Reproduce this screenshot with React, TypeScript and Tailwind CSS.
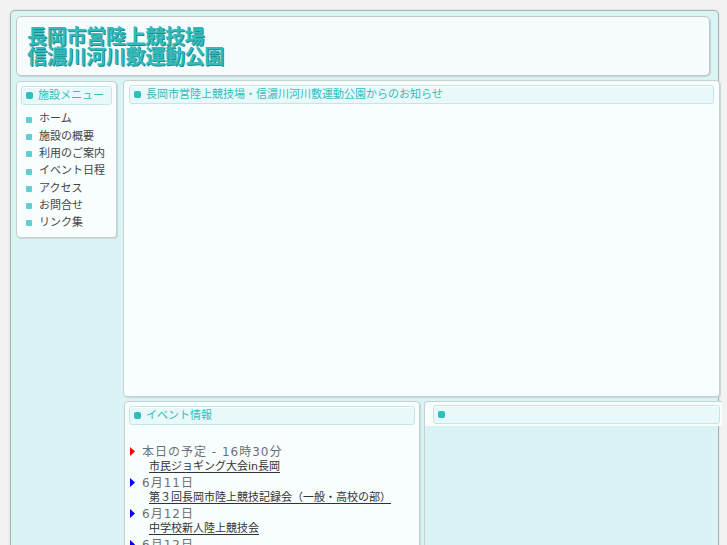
import React from "react";

const news = [
  { color: "#ff0000", date: "本日の予定 - 16時30分", link: "市民ジョギング大会in長岡" },
  { color: "#0000ff", date: "6月11日", link: "第３回長岡市陸上競技記録会（一般・高校の部）" },
  { color: "#0000ff", date: "6月12日", link: "中学校新人陸上競技会" },
  { color: "#0000ff", date: "6月12日", link: "信濃川河川敷ウォーキング" },
];

const menu = ["ホーム", "施設の概要", "利用のご案内", "イベント日程", "アクセス", "お問合せ", "リンク集"];

function Pill({ children, className = "" }: { children?: React.ReactNode; className?: string }) {
  return (
    <div
      className={
        "flex h-[19px] items-center gap-[5px] rounded-[3px] border border-[#c3e6e8] bg-[#e9f8f9] pl-[4px] text-[11px] leading-none text-[#33bcbc] shadow-[inset_0_1px_0_#ffffff] " +
        className
      }
    >
      <span className="h-[7px] w-[7px] shrink-0 rounded-[2px] bg-[#2fbdbd]" />
      {children}
    </div>
  );
}

export default function App() {
  return (
    <div className="min-h-screen overflow-hidden bg-[#f2f2f2] pl-[10px] pt-[10px] font-['DejaVu_Sans','Noto_Sans_CJK_JP',sans-serif]">
      <div className="h-[560px] w-[709px] rounded-[5px] border border-[#a9b3b3] bg-[#daf4f5] p-[5px] shadow-[0_0_2px_#c8cccc]">
        <header className="h-[60px] w-[694px] rounded-[5px] border border-[#bfc9c9] bg-[#f6fcfd] pl-[10px] pt-[9px] shadow-[1px_1px_1px_#c6d2d2]">
          <h1 className="font-['Noto_Sans_CJK_JP',sans-serif] text-[20px] font-bold leading-[20px] tracking-[-0.3px] text-[#34baba] [text-shadow:1px_1px_0_#1f8d8d]">
            <span className="block">長岡市営陸上競技場</span>
            <span className="block">信濃川河川敷運動公園</span>
          </h1>
        </header>

        <div className="mt-[4px] flex gap-[6px]">
          <aside className="mt-px h-[157px] w-[101px] shrink-0 rounded-[4px] border border-[#c4d2d2] bg-[#f8fdfd] p-[4px] shadow-[1px_1px_1px_#c9d6d6]">
            <Pill>施設メニュー</Pill>
            <ul className="mt-[6px] flex flex-col">
              {menu.map((m) => (
                <li key={m} className="flex h-[17.3px] items-center gap-[7px] pl-[5px] text-[11px] text-[#444444]">
                  <span className="h-[6px] w-[6px] shrink-0 rounded-[1px] bg-[#5fcfd0]" />
                  <span className="whitespace-nowrap">{m}</span>
                </li>
              ))}
            </ul>
          </aside>

          <div className="w-[597px] shrink-0">
            <section className="h-[317px] rounded-[4px] border border-[#c4d2d2] bg-[#f8fdfd] px-[5px] pt-[4px] shadow-[1px_1px_1px_#c9d6d6]">
              <Pill>長岡市営陸上競技場・信濃川河川敷運動公園からのお知らせ</Pill>
            </section>

            <div className="mt-[4px] flex gap-[4px]">
              <section className="ml-px h-[160px] w-[296px] shrink-0 rounded-[4px] border border-[#c4d2d2] bg-[#f8fdfd] px-[4px] pt-[4px] shadow-[1px_1px_1px_#c9d6d6]">
                <Pill>イベント情報</Pill>
                <ul className="mt-[19px] flex flex-col">
                  {news.map((n, i) => (
                    <li key={i} className="flex flex-col">
                      <div className="flex h-[15.5px] items-center">
                        <svg width="5" height="9" viewBox="0 0 5 9" className="ml-px mr-[7px] shrink-0">
                          <path d="M0 0 L5 4.5 L0 9 Z" fill={n.color} />
                        </svg>
                        <span className="whitespace-nowrap text-[12px] tracking-[1px] text-[#6f6f6f]">{n.date}</span>
                      </div>
                      <div className="flex h-[15.5px] items-center pl-[20px]">
                        <a className="whitespace-nowrap text-[11px] text-[#333333] underline underline-offset-2">{n.link}</a>
                      </div>
                    </li>
                  ))}
                </ul>
              </section>

              <section className="h-[160px] w-[298px] shrink-0 rounded-tl-[4px] border-l border-t border-[#c4d2d2]">
                <div className="rounded-tl-[4px] bg-[#f8fdfd] pb-[2px] pl-[8px] pr-[2px] pt-[3px]">
                  <Pill />
                </div>
              </section>
            </div>
          </div>
        </div>
      </div>
    </div>
  );
}
